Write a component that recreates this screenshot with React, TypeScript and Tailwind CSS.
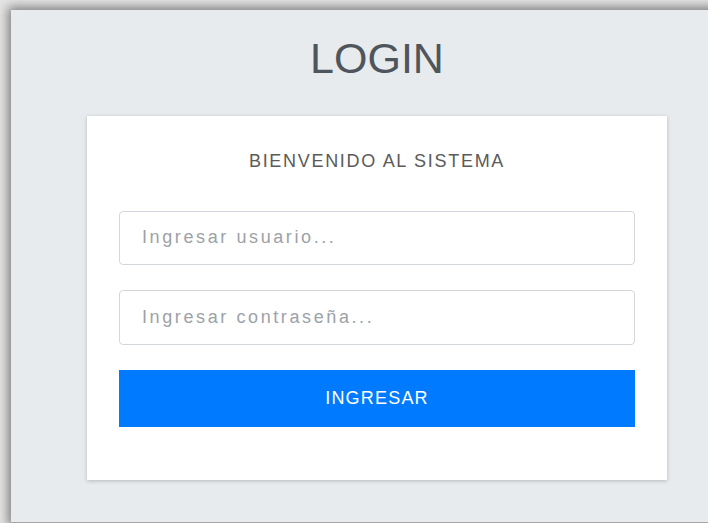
export default function App() {
  return (
    <div className="h-[523px] w-[708px] overflow-hidden bg-[#e4e4e4] pl-[11px] pt-[10px] font-['Liberation_Sans',Arial,sans-serif]">
      {/* page area */}
      <div className="h-[513px] w-[720px] border-b border-[#a6a6a6] bg-[#e8ebee] pt-[23px] shadow-[0_0_10px_3px_rgba(0,0,0,0.45)]">
        <h1 className="w-[580px] ml-[76px] text-center text-[43px] leading-[1.2] font-normal text-[#4f555c]">
          LOGIN
        </h1>

        <div className="mt-[31px] ml-[76px] w-[580px] bg-white px-8 pt-8 pb-[53px] shadow-[0_1px_4px_rgba(0,0,0,0.22)]">
          <p className="text-center text-[18px] leading-[27px] tracking-[1.7px] text-[#5a5a5a]">
            BIENVENIDO AL SISTEMA
          </p>

          <form className="mt-[36px] flex flex-col gap-[25px]" onSubmit={(e) => e.preventDefault()}>
            <input
              type="text"
              placeholder="Ingresar usuario..."
              className="h-[54px] w-full rounded-[4px] border border-[#d3d7dc] pl-[22px] text-[18px] tracking-[2.6px] text-[#495057] outline-none placeholder:text-[#9ca2a8]"
            />
            <input
              type="password"
              placeholder="Ingresar contraseña..."
              className="h-[55px] w-full rounded-[4px] border border-[#d3d7dc] pl-[22px] text-[18px] tracking-[2.6px] text-[#495057] outline-none placeholder:text-[#9ca2a8]"
            />
            <button
              type="submit"
              className="h-[57px] w-full bg-[#007bff] text-[18px] tracking-[1.2px] text-white"
            >
              INGRESAR
            </button>
          </form>
        </div>
      </div>
    </div>
  );
}
